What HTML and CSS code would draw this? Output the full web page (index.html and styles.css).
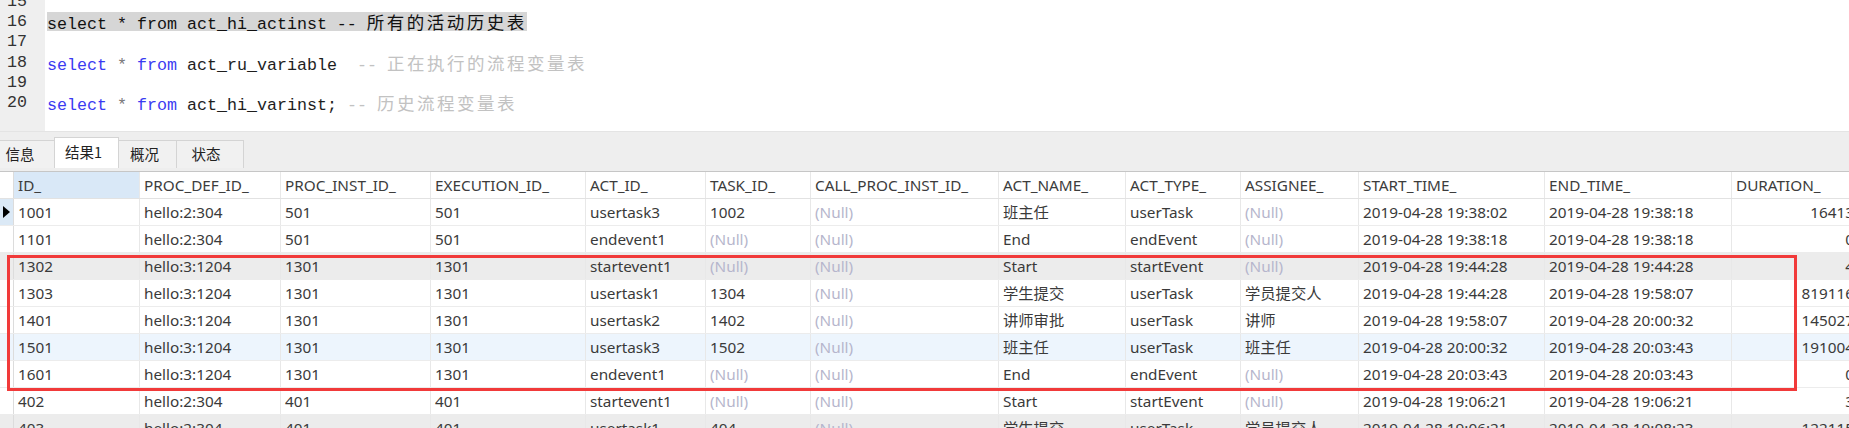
FILE: index.html
```html
<!DOCTYPE html>
<html>
<head>
<meta charset="utf-8">
<link rel="stylesheet" href="styles.css">
</head>
<body>
<div class="app">
  <div class="editor">
    <div class="gutter">
      <div class="ln">15</div><div class="ln">16</div><div class="ln">17</div><div class="ln">18</div><div class="ln">19</div><div class="ln">20</div>
    </div>
    <div class="code">
      <div class="cl"></div>
      <div class="cl"><span class="sel">select * from act_hi_actinst -- <span class="cjk">所有的活动历史表</span></span></div>
      <div class="cl"></div>
      <div class="cl"><span class="kw">select</span> <span class="op">*</span> <span class="kw">from</span> act_ru_variable  <span class="cm">-- <span class="cjk">正在执行的流程变量表</span></span></div>
      <div class="cl"></div>
      <div class="cl"><span class="kw">select</span> <span class="op">*</span> <span class="kw">from</span> act_hi_varinst; <span class="cm">-- <span class="cjk">历史流程变量表</span></span></div>
    </div>
  </div>
  <div class="tabbar">
    <div class="tab first">信息</div>
    <div class="tab active">结果1</div>
    <div class="tab">概况</div>
    <div class="tab last">状态</div>
  </div>
  <div class="grid">
    <div class="row head">
      <div class="c ind"></div><div class="c hsel">ID_</div><div class="c">PROC_DEF_ID_</div><div class="c">PROC_INST_ID_</div><div class="c">EXECUTION_ID_</div><div class="c">ACT_ID_</div><div class="c">TASK_ID_</div><div class="c">CALL_PROC_INST_ID_</div><div class="c">ACT_NAME_</div><div class="c">ACT_TYPE_</div><div class="c">ASSIGNEE_</div><div class="c">START_TIME_</div><div class="c">END_TIME_</div><div class="c">DURATION_</div>
    </div>
    <div class="row">
      <div class="c ind cur"><span class="tri"></span></div><div class="c">1001</div><div class="c">hello:2:304</div><div class="c">501</div><div class="c">501</div><div class="c">usertask3</div><div class="c">1002</div><div class="c null">(Null)</div><div class="c">班主任</div><div class="c">userTask</div><div class="c null">(Null)</div><div class="c">2019-04-28 19:38:02</div><div class="c">2019-04-28 19:38:18</div><div class="c num">16413</div>
    </div>
    <div class="row">
      <div class="c ind"></div><div class="c">1101</div><div class="c">hello:2:304</div><div class="c">501</div><div class="c">501</div><div class="c">endevent1</div><div class="c null">(Null)</div><div class="c null">(Null)</div><div class="c">End</div><div class="c">endEvent</div><div class="c null">(Null)</div><div class="c">2019-04-28 19:38:18</div><div class="c">2019-04-28 19:38:18</div><div class="c num">0</div>
    </div>
    <div class="row gray">
      <div class="c ind"></div><div class="c">1302</div><div class="c">hello:3:1204</div><div class="c">1301</div><div class="c">1301</div><div class="c">startevent1</div><div class="c null">(Null)</div><div class="c null">(Null)</div><div class="c">Start</div><div class="c">startEvent</div><div class="c null">(Null)</div><div class="c">2019-04-28 19:44:28</div><div class="c">2019-04-28 19:44:28</div><div class="c num">4</div>
    </div>
    <div class="row">
      <div class="c ind"></div><div class="c">1303</div><div class="c">hello:3:1204</div><div class="c">1301</div><div class="c">1301</div><div class="c">usertask1</div><div class="c">1304</div><div class="c null">(Null)</div><div class="c">学生提交</div><div class="c">userTask</div><div class="c">学员提交人</div><div class="c">2019-04-28 19:44:28</div><div class="c">2019-04-28 19:58:07</div><div class="c num">819116</div>
    </div>
    <div class="row">
      <div class="c ind"></div><div class="c">1401</div><div class="c">hello:3:1204</div><div class="c">1301</div><div class="c">1301</div><div class="c">usertask2</div><div class="c">1402</div><div class="c null">(Null)</div><div class="c">讲师审批</div><div class="c">userTask</div><div class="c">讲师</div><div class="c">2019-04-28 19:58:07</div><div class="c">2019-04-28 20:00:32</div><div class="c num">145027</div>
    </div>
    <div class="row blue">
      <div class="c ind"></div><div class="c">1501</div><div class="c">hello:3:1204</div><div class="c">1301</div><div class="c">1301</div><div class="c">usertask3</div><div class="c">1502</div><div class="c null">(Null)</div><div class="c">班主任</div><div class="c">userTask</div><div class="c">班主任</div><div class="c">2019-04-28 20:00:32</div><div class="c">2019-04-28 20:03:43</div><div class="c num">191004</div>
    </div>
    <div class="row">
      <div class="c ind"></div><div class="c">1601</div><div class="c">hello:3:1204</div><div class="c">1301</div><div class="c">1301</div><div class="c">endevent1</div><div class="c null">(Null)</div><div class="c null">(Null)</div><div class="c">End</div><div class="c">endEvent</div><div class="c null">(Null)</div><div class="c">2019-04-28 20:03:43</div><div class="c">2019-04-28 20:03:43</div><div class="c num">0</div>
    </div>
    <div class="row">
      <div class="c ind"></div><div class="c">402</div><div class="c">hello:2:304</div><div class="c">401</div><div class="c">401</div><div class="c">startevent1</div><div class="c null">(Null)</div><div class="c null">(Null)</div><div class="c">Start</div><div class="c">startEvent</div><div class="c null">(Null)</div><div class="c">2019-04-28 19:06:21</div><div class="c">2019-04-28 19:06:21</div><div class="c num">3</div>
    </div>
    <div class="row gray">
      <div class="c ind"></div><div class="c">403</div><div class="c">hello:2:304</div><div class="c">401</div><div class="c">401</div><div class="c">usertask1</div><div class="c">404</div><div class="c null">(Null)</div><div class="c">学生提交</div><div class="c">userTask</div><div class="c">学员提交人</div><div class="c">2019-04-28 19:06:21</div><div class="c">2019-04-28 19:08:23</div><div class="c num">122115</div>
    </div>
    <div class="mark"></div>
  </div>
</div>
</body>
</html>
```
FILE: styles.css
```css
html, body {
  margin: 0;
  padding: 0;
  background: #ffffff;
}
.app {
  width: 1849px;
  height: 428px;
  overflow: hidden;
  position: relative;
}
.editor {
  display: flex;
  height: 131px;
  overflow: hidden;
  background: #ffffff;
  font-family: "Liberation Mono", "DejaVu Sans Mono", "Noto Sans CJK SC", monospace;
  font-size: 16.67px;
}
.gutter {
  width: 45px;
  background: #efefef;
  padding-left: 7px;
  box-sizing: border-box;
  margin-top: -8px;
  color: #333333;
}
.ln, .cl {
  height: 20.2px;
  line-height: 20.2px;
  white-space: pre;
}
.code {
  flex: 1;
  margin-top: -8px;
  padding-left: 2px;
  color: #1e1e1e;
}
.sel {
  background: #d6d6d6;
  color: #111111;
  display: inline-block;
  height: 19px;
  line-height: 19px;
}
.kw { color: #3b3bf2; }
.op { color: #777777; }
.cm { color: #c2c2c2; }
.cjk {
  font-family: "Noto Sans CJK SC", sans-serif;
  font-size: 17.5px;
  letter-spacing: 2.5px;
}
.tabbar {
  height: 40px;
  background: #eeeeee;
  border-top: 1px solid #e4e4e4;
  box-sizing: border-box;
  display: flex;
  align-items: flex-end;
  padding-bottom: 3px;
  font-family: "Noto Sans CJK SC", "Noto Sans", sans-serif;
  font-size: 14.5px;
  color: #222222;
}
.tab {
  height: 28px;
  line-height: 26px;
  box-sizing: border-box;
  border: 1px solid #d4d4d4;
  border-bottom: none;
  background: #f1f1f1;
  text-align: center;
  margin-left: -1px;
}
.tab.first { width: 55px; padding-right: 14px; border-left: none; margin-left: 0; }
.tab.active {
  width: 65px;
  height: 31px;
  line-height: 27px;
  background: #ffffff;
  padding-right: 6px;
  position: relative;
  z-index: 1;
}
.tab:nth-child(3) { width: 59px; padding-right: 6px; }
.tab.last { width: 68px; padding-right: 8px; }
.grid {
  position: relative;
  border-top: 1px solid #c6c6c6;
  font-family: "Noto Sans", "Noto Sans CJK SC", sans-serif;
  font-size: 15.3px;
  color: #3a3a3a;
}
.row {
  display: grid;
  grid-template-columns: 14px 126px 141px 150px 155px 120px 105px 188px 127px 115px 118px 186px 187px 123px;
  height: 27px;
  box-sizing: border-box;
  border-bottom: 1px solid #ececec;
  background: #ffffff;
}
.row.head {
  color: #3c3c3c;
  border-bottom: 1px solid #e2e2e2;
}
.row.gray { background: #ececec; }
.row.blue { background: #edf5fd; }
.c {
  box-sizing: border-box;
  border-right: 1px solid #e8e8e8;
  padding-left: 4px;
  line-height: 26px;
  white-space: nowrap;
  overflow: hidden;
}
.c.ind { padding: 0; border-right: 1px solid #dcdcdc; position: relative; }
.c.cur { background: #dbe9f6; }
.c.hsel { background: #d9e8f7; }
.c.null { color: #b6b6cc; }
.c.num { text-align: right; padding-left: 0; padding-right: 0; overflow: visible; }
.tri {
  position: absolute;
  left: 3px;
  top: 7px;
  width: 0;
  height: 0;
  border-top: 6px solid transparent;
  border-bottom: 6px solid transparent;
  border-left: 7px solid #000000;
}
.mark {
  position: absolute;
  left: 7px;
  top: 83px;
  width: 1790px;
  height: 136px;
  box-sizing: border-box;
  border: 3px solid #f13a3a;
  pointer-events: none;
}
```
